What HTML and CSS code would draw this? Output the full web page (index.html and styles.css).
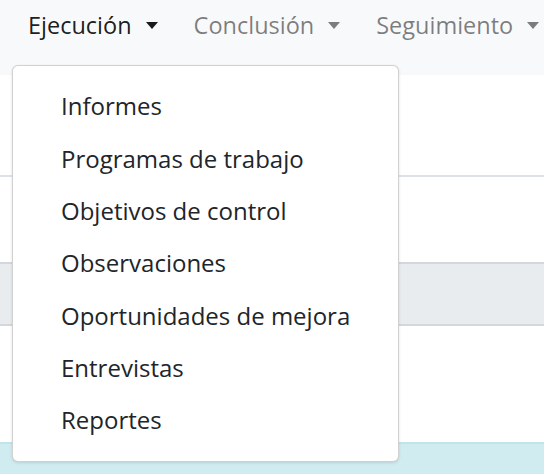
FILE: index.html
```html
<!DOCTYPE html>
<html lang="es">
<head>
<meta charset="utf-8">
<link rel="stylesheet" href="styles.css">
</head>
<body>
<nav class="navbar">
  <ul class="nav">
    <li class="nav-item active dropdown">
      <a class="nav-link">Ejecución<span class="caret"></span></a>
      <div class="dropdown-menu">
        <a class="dropdown-item">Informes</a>
        <a class="dropdown-item">Programas de trabajo</a>
        <a class="dropdown-item">Objetivos de control</a>
        <a class="dropdown-item">Observaciones</a>
        <a class="dropdown-item">Oportunidades de mejora</a>
        <a class="dropdown-item">Entrevistas</a>
        <a class="dropdown-item">Reportes</a>
      </div>
    </li>
    <li class="nav-item"><a class="nav-link">Conclusión<span class="caret"></span></a></li>
    <li class="nav-item"><a class="nav-link">Seguimiento<span class="caret"></span></a></li>
  </ul>
</nav>
<main class="content">
  <div class="block-top"></div>
  <div class="block-white"></div>
  <div class="block-gray"></div>
  <div class="block-white2"></div>
  <div class="alert-info"></div>
</main>
</body>
</html>
```
FILE: styles.css
```css
* { box-sizing: border-box; }
html, body { margin: 0; padding: 0; }
body {
  font-family: "Open Sans", "Liberation Sans", sans-serif;
  color: #212529;
  background: #fff;
  width: 544px;
  height: 474px;
  overflow: hidden;
}
.navbar {
  background: #f8f9fa;
  height: 75px;
  padding: 0 0 0 10px;
}
.nav {
  list-style: none;
  margin: 0;
  padding: 0;
  display: flex;
  white-space: nowrap;
}
.nav-item { position: relative; }
.nav-link {
  display: block;
  font-size: 23.5px;
  line-height: 34px;
  padding: 8px 18px;
  color: rgba(0, 0, 0, 0.5);
}
.active .nav-link { color: rgba(0, 0, 0, 0.9); }
.caret {
  display: inline-block;
  vertical-align: 5px;
  margin-left: 14px;
  border-top: 7px solid currentColor;
  border-left: 6px solid transparent;
  border-right: 6px solid transparent;
}
.dropdown-menu {
  position: absolute;
  top: 65px;
  left: 2px;
  width: 387px;
  background: #fff;
  border: 1px solid rgba(0, 0, 0, 0.18);
  border-radius: 6px;
  box-shadow: 0 1px 3px rgba(0, 0, 0, 0.12);
  padding: 14px 0;
  z-index: 10;
}
.dropdown-item {
  display: block;
  font-size: 24px;
  line-height: 36px;
  padding: 8.2px 48px;
  color: #212529;
}
.block-top { height: 102px; border-bottom: 2px solid #dee2e6; }
.block-white { height: 85px; }
.block-gray { height: 64px; background: #e9ecef; border-top: 2px solid #d3d7db; border-bottom: 2px solid #d3d7db; }
.block-white2 { height: 116px; }
.alert-info { height: 40px; background: #d1ecf1; border-top: 2px solid #bee5eb; }
```
